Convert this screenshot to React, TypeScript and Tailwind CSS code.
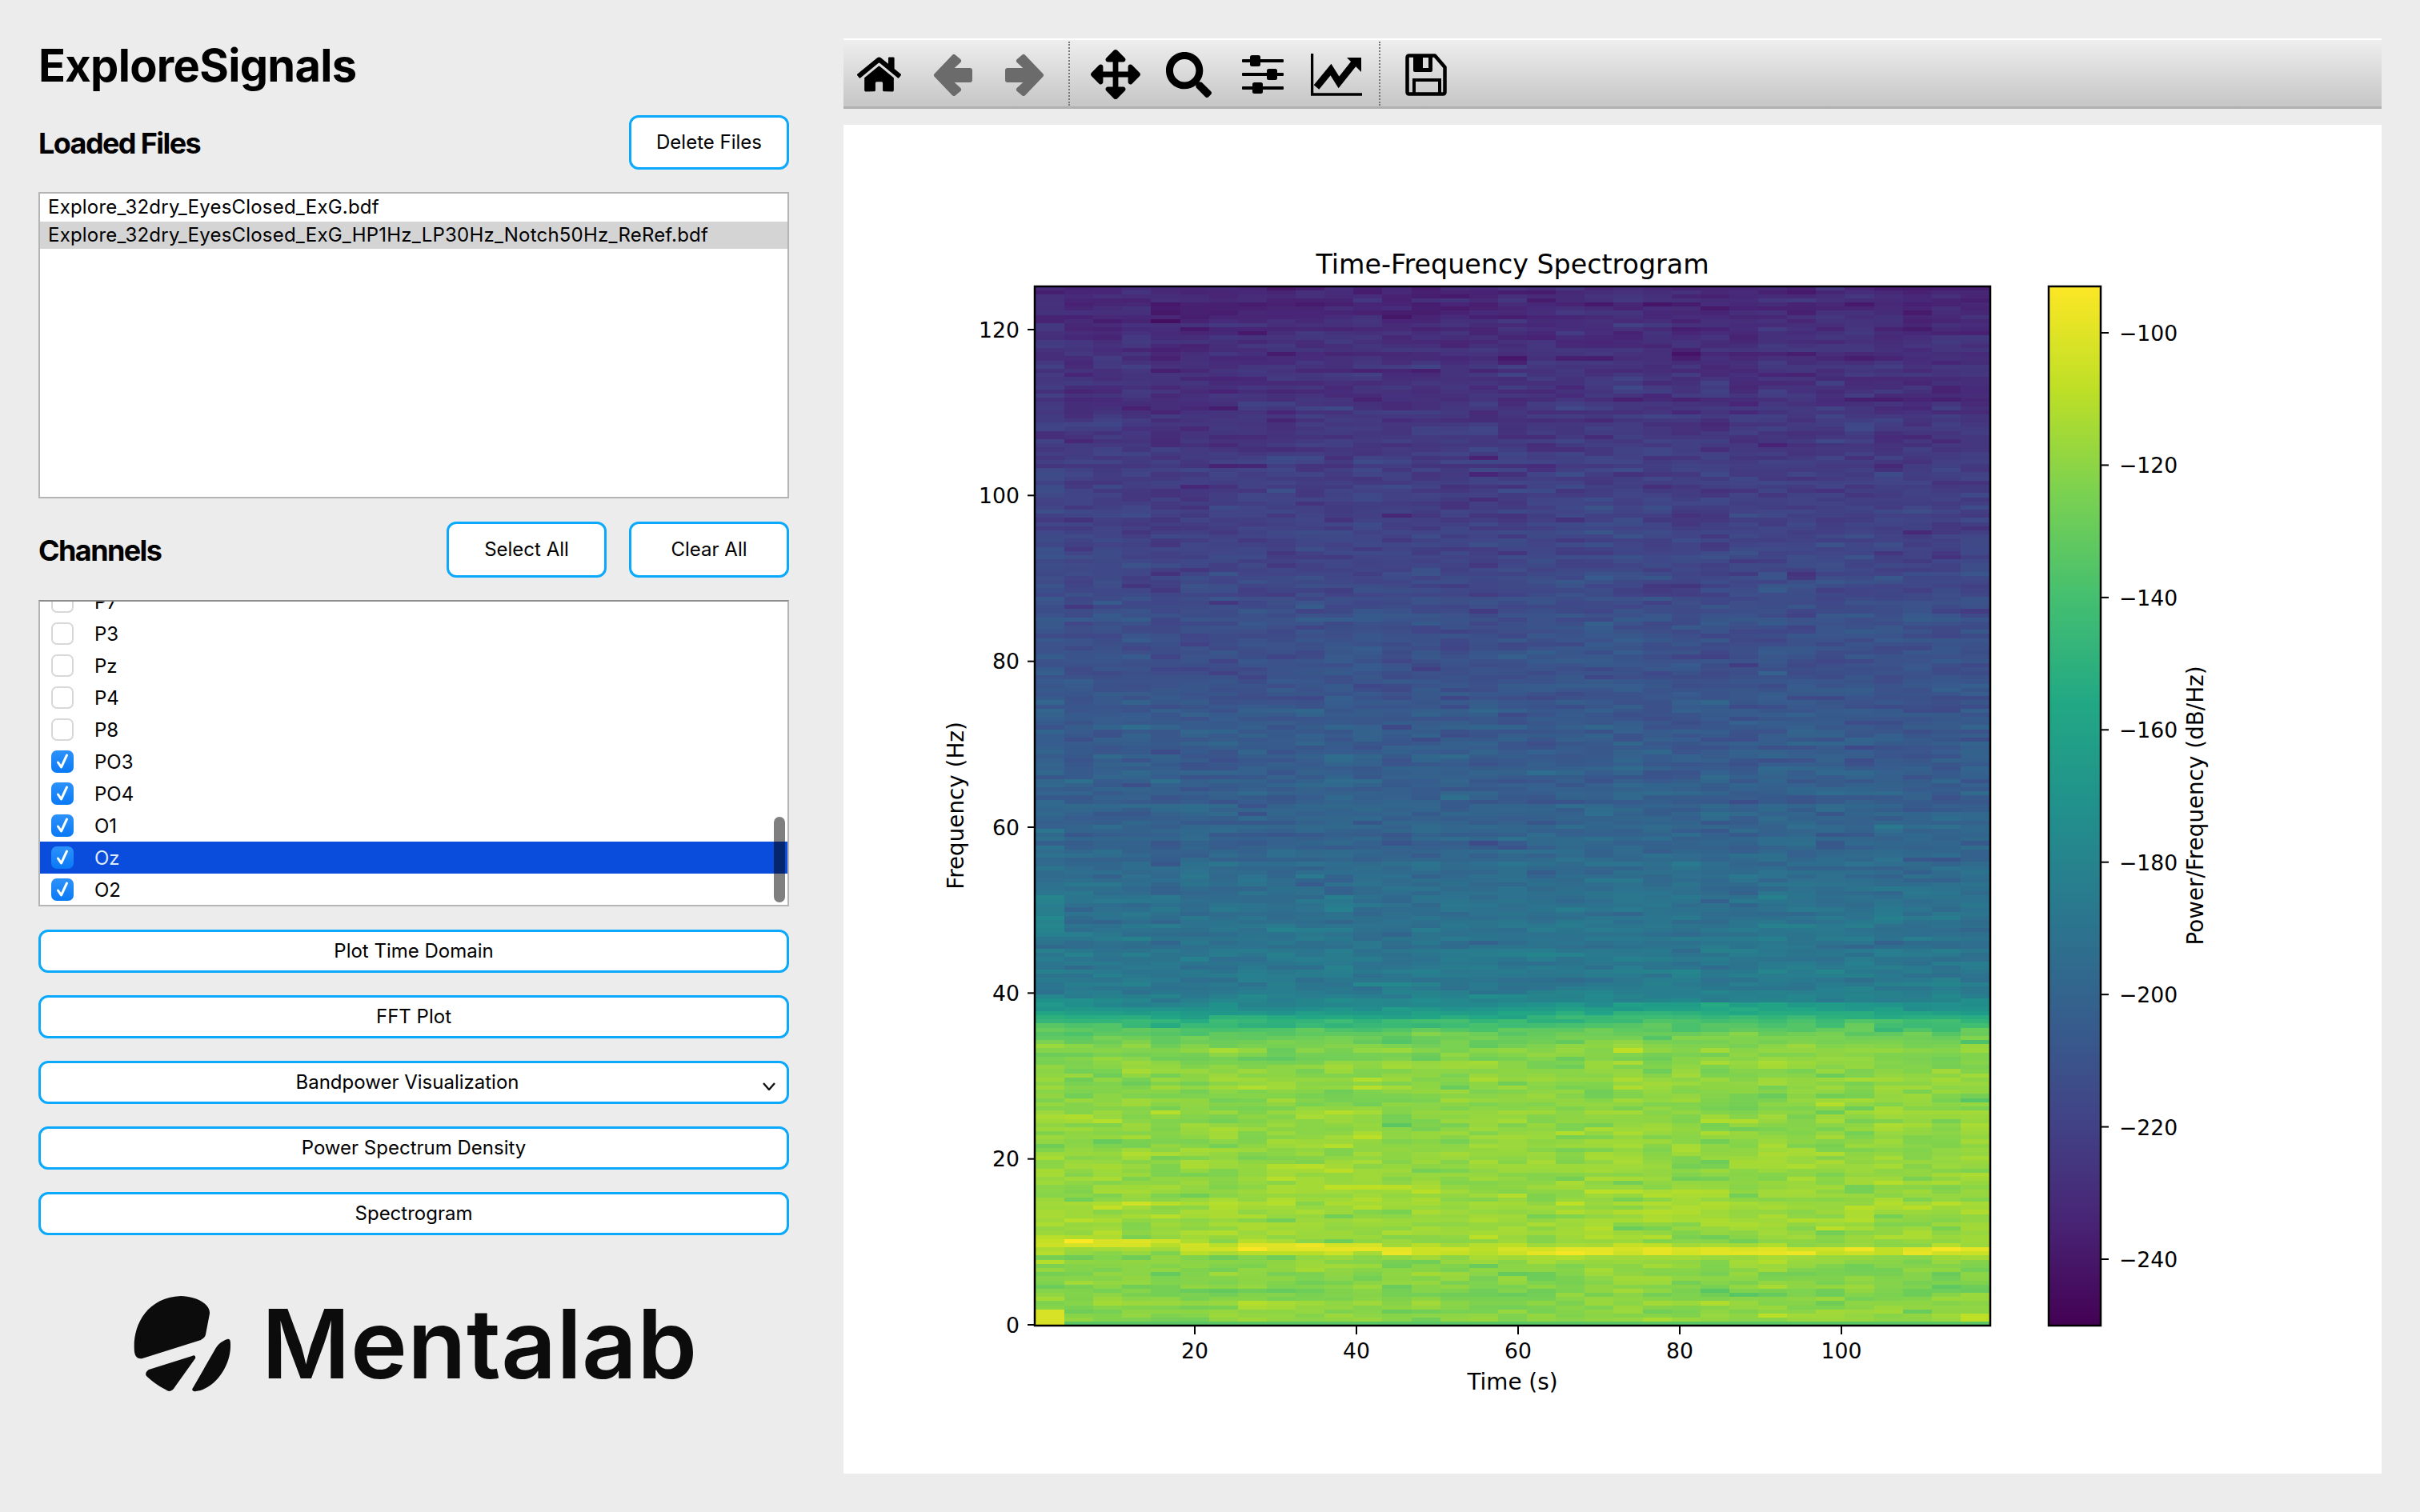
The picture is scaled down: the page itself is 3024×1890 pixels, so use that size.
import { FaArrowsAlt, FaHome, FaSearch } from "react-icons/fa";

const VIRIDIS = [
  [68, 1, 84],
  [72, 36, 117],
  [65, 68, 135],
  [53, 95, 141],
  [42, 120, 142],
  [33, 145, 140],
  [34, 168, 132],
  [68, 191, 112],
  [122, 209, 81],
  [189, 223, 38],
  [253, 231, 37],
];

function viridis(v: number) {
  const t = Math.min(0.999, Math.max(0, v)) * 10;
  const i = Math.floor(t);
  const a = VIRIDIS[i];
  const b = VIRIDIS[i + 1];
  const k = t - i;
  const c = a.map((x, n) => Math.round(x + (b[n] - x) * k));
  return `rgb(${c[0]},${c[1]},${c[2]})`;
}

// mean colour position per frequency, read off the picture
const PROFILE = [
  [0, 0.835], [2, 0.825], [6, 0.815], [12, 0.85], [20, 0.84], [30, 0.83], [34, 0.805], [36, 0.73],
  [37.5, 0.61], [39, 0.46], [41, 0.41], [50, 0.37], [60, 0.32], [80, 0.255], [100, 0.185], [125, 0.11],
];

function profile(f: number) {
  for (let i = 1; i < PROFILE.length; i++) {
    if (f <= PROFILE[i][0]) {
      const [f0, v0] = PROFILE[i - 1];
      const [f1, v1] = PROFILE[i];
      return v0 + ((v1 - v0) * (f - f0)) / (f1 - f0);
    }
  }
  return 0.11;
}

function makeRng(seed: number) {
  let a = seed;
  return () => {
    a = (a + 0x6d2b79f5) | 0;
    let t = Math.imul(a ^ (a >>> 15), 1 | a);
    t = (t + Math.imul(t ^ (t >>> 7), 61 | t)) ^ t;
    return ((t ^ (t >>> 14)) >>> 0) / 4294967296;
  };
}

const COLS = 33;
const ROWS = 251;
const AX = { left: 1294, right: 2486, top: 358, bottom: 1657 };
const ROW_H = 5.18;
const COL_W = (AX.right - AX.left) / COLS;

function buildCells() {
  const rnd = makeRng(42);
  const gauss = () => (rnd() + rnd() + rnd() - 1.5) / 0.5;
  const rowBias = Array.from({ length: ROWS }, () => gauss() * 0.012);
  const prev = new Array(ROWS).fill(0);
  const cells: { x: number; y: number; fill: string }[] = [];
  for (let c = 0; c < COLS; c++) {
    const colBias = gauss() * 0.004;
    const t = c / (COLS - 1);
    const edge = Math.sin(t * 6.3) * 0.5;
    const peak = 10.1 - 1.1 * Math.min(1, t * 2.2) + 0.5 * Math.max(0, t - 0.6);
    const peakGain = 0.6 + rnd() * 0.7;
    let below = 0;
    for (let r = 0; r < ROWS; r++) {
      const f = (r + 0.5) / 2;
      // streaks run along time, barely across frequency
      const spike = rnd() < 0.07 ? (rnd() < 0.6 ? -0.04 : 0.035) : 0;
      const noise = 0.2 * prev[r] + 0.12 * below + gauss() * 0.019 + spike;
      prev[r] = noise;
      below = noise;
      let v = profile(f + edge) + rowBias[r] * 0.6 + colBias + noise;
      const d = Math.abs(f - peak);
      if (d < 2) v += 0.07 * (1 - d / 2) * (1 - d / 2) + (d < 0.5 ? 0.06 * peakGain : 0);
      if (c === 0 && f > 45) v += 0.02;
      if (c === 0 && f > 47 && f < 52) v += 0.05;
      if (c === 0 && f < 2) v = 0.94;
      if (c === COLS - 1 && f < 1.5) v = 0.9;
      if (r === 0 && c > 0) v = 0.74;
      cells.push({
        x: AX.left + c * COL_W,
        y: AX.bottom - (r + 1) * ROW_H,
        fill: viridis(v),
      });
    }
  }
  return cells;
}

const CELLS = buildCells();
const Y_TICKS = [0, 20, 40, 60, 80, 100, 120];
const X_TICKS = [20, 40, 60, 80, 100];
const CB_TICKS = [-100, -120, -140, -160, -180, -200, -220, -240];
const TICK_FONT = { fontFamily: "'DejaVu Sans', sans-serif", fontSize: 26.67 };
const LABEL_FONT = { fontFamily: "'DejaVu Sans', sans-serif", fontSize: 27.8 };

function Spectrogram() {
  return (
    <svg viewBox="1054 156 1922 1686" className="block w-full h-full">
      <defs>
        <linearGradient id="viridis" x1="0" y1="1" x2="0" y2="0">
          {VIRIDIS.map((_, i) => (
            <stop key={i} offset={`${i * 10}%`} stopColor={viridis(i / 10)} />
          ))}
        </linearGradient>
      </defs>
      <g shapeRendering="crispEdges">
        {CELLS.map((c, i) => (
          <rect key={i} x={c.x} y={c.y} width={COL_W + 0.5} height={ROW_H + 0.5} fill={c.fill} />
        ))}
      </g>
      <rect x={AX.left - 1} y={AX.top} width={AX.right - AX.left + 2} height={AX.bottom - AX.top} fill="none" stroke="#000" strokeWidth="2.5" />
      {Y_TICKS.map((t) => {
        const y = 1656 - (t * 1244) / 120;
        return (
          <g key={t}>
            <line x1={1284} x2={AX.left} y1={y} y2={y} stroke="#000" strokeWidth="2" />
            <text x={1274} y={y + 9.7} textAnchor="end" style={TICK_FONT}>{t}</text>
          </g>
        );
      })}
      {X_TICKS.map((t) => {
        const x = 1493 + ((t - 20) * 808) / 80;
        return (
          <g key={t}>
            <line x1={x} x2={x} y1={AX.bottom} y2={1668} stroke="#000" strokeWidth="2" />
            <text x={x} y={1698} textAnchor="middle" style={TICK_FONT}>{t}</text>
          </g>
        );
      })}
      <text x={1890} y={342} textAnchor="middle" style={{ ...TICK_FONT, fontSize: 33.3 }}>Time-Frequency Spectrogram</text>
      <text x={1890} y={1737} textAnchor="middle" style={LABEL_FONT}>Time (s)</text>
      <text transform="translate(1204 1007) rotate(-90)" textAnchor="middle" style={LABEL_FONT}>Frequency (Hz)</text>
      <rect x={2560} y={AX.top} width={65} height={AX.bottom - AX.top} fill="url(#viridis)" stroke="#000" strokeWidth="2.5" />
      {CB_TICKS.map((t) => {
        const y = 416 + ((-100 - t) * 1158) / 140;
        return (
          <g key={t}>
            <line x1={2625} x2={2635} y1={y} y2={y} stroke="#000" strokeWidth="2" />
            <text x={2648} y={y + 10} style={TICK_FONT}>{"\u2212" + Math.abs(t)}</text>
          </g>
        );
      })}
      <text transform="translate(2753 1007) rotate(-90)" textAnchor="middle" style={LABEL_FONT}>Power/Frequency (dB/Hz)</text>
    </svg>
  );
}

function ArrowIcon({ flip }: { flip?: boolean }) {
  return (
    <svg viewBox="0 0 50 53" className={`w-[50px] h-[53px] ${flip ? "-scale-x-100" : ""}`}>
      <path d="M4 27 L26 4 L32 9 L19 21 L46 21 L46 33 L19 33 L32 45 L26 50 Z" fill="#6b6b6b" stroke="#6b6b6b" strokeWidth="6" strokeLinejoin="round" />
    </svg>
  );
}

function ChartIcon() {
  return (
    <svg viewBox="0 0 64 53" className="w-[64px] h-[53px]">
      <path d="M1.5 0 V51 H64" fill="none" stroke="#000" strokeWidth="3.5" />
      <path d="M7 42 L25 20 L35 36 L54 12" fill="none" stroke="#000" strokeWidth="8.5" />
      <path d="M45 5 H63 V23 Z" fill="#000" />
    </svg>
  );
}

function SlidersIcon() {
  return (
    <svg viewBox="0 0 52 48" className="w-[52px] h-[48px]">
      <g fill="#000">
        <rect x="0" y="5" width="52" height="4" rx="1" />
        <rect x="0" y="22" width="52" height="4" rx="1" />
        <rect x="0" y="39" width="52" height="4" rx="1" />
        <rect x="10" y="0" width="13" height="14" rx="2.5" />
        <rect x="31" y="17" width="13" height="14" rx="2.5" />
        <rect x="13" y="34" width="13" height="14" rx="2.5" />
      </g>
    </svg>
  );
}

function SaveIcon() {
  return (
    <svg viewBox="0 0 52 53" className="w-[52px] h-[53px]">
      <path d="M2.5 5 Q2.5 2.5 5 2.5 H37 L49.5 17 V48 Q49.5 50.5 47 50.5 H5 Q2.5 50.5 2.5 48 Z" fill="none" stroke="#000" strokeWidth="4.5" strokeLinejoin="round" />
      <path d="M10 2 H34 V21 Q34 23 32 23 H12 Q10 23 10 21 Z" fill="#000" />
      <rect x="22" y="5" width="7" height="13" fill="#dcdcdc" />
      <path d="M11 51 V33 H43 V51" fill="none" stroke="#000" strokeWidth="4" />
    </svg>
  );
}

function ToolSeparator({ className }: { className: string }) {
  return <div className={`h-[80px] -mt-[2px] border-l-2 border-dotted border-[#777] ${className}`} />;
}

function Toolbar() {
  return (
    <div className="h-[88px] pt-[3px] flex items-center border-t-2 border-t-white border-b-[3px] border-b-[#b0b0b0] bg-linear-to-b from-[#eeeeee] to-[#c6c6c6]">
      <FaHome className="ml-[17px] w-[55px] h-[50px]" />
      <div className="ml-[40px]"><ArrowIcon /></div>
      <div className="ml-[39px]"><ArrowIcon flip /></div>
      <ToolSeparator className="ml-[30px]" />
      <FaArrowsAlt className="ml-[26px] w-[62px] h-[62px]" />
      <FaSearch className="ml-[32px] w-[57px] h-[57px]" />
      <div className="ml-[38px]"><SlidersIcon /></div>
      <div className="ml-[34px]"><ChartIcon /></div>
      <ToolSeparator className="ml-[21px]" />
      <div className="ml-[31px]"><SaveIcon /></div>
    </div>
  );
}

function OutlineButton({ label, className }: { label: string; className: string }) {
  return (
    <button className={`bg-white border-[3px] border-[#0aa9fb] rounded-[12px] text-[24px] leading-none text-black flex items-center justify-center ${className}`}>
      {label}
    </button>
  );
}

function SectionHeader({ title, children }: { title: string; children: React.ReactNode }) {
  return (
    <div className="flex items-center justify-between h-[70px]">
      <h2 className="mt-[2px] text-[36px] font-bold tracking-[-1.6px] text-black">{title}</h2>
      <div className="flex gap-[28px]">{children}</div>
    </div>
  );
}

function Check() {
  return (
    <svg viewBox="0 0 28 28" className="w-full h-full">
      <path d="M8.5 15 L12.5 21 L19.5 6" fill="none" stroke="#fff" strokeWidth="3" strokeLinecap="round" strokeLinejoin="round" />
    </svg>
  );
}

const CHANNELS = [
  { name: "P7", on: false },
  { name: "P3", on: false },
  { name: "Pz", on: false },
  { name: "P4", on: false },
  { name: "P8", on: false },
  { name: "PO3", on: true },
  { name: "PO4", on: true },
  { name: "O1", on: true },
  { name: "Oz", on: true, active: true },
  { name: "O2", on: true },
];

function ChannelList() {
  return (
    <div className="relative h-[383px] bg-white border-2 border-[#b4b4b4] border-t-[#8e8e8e] overflow-hidden flex flex-col justify-end">
      <div className="-mb-px">
        {CHANNELS.map((ch) => (
          <div key={ch.name} className={`h-[40px] flex items-center pl-[14px] text-[24px] ${ch.active ? "bg-[#0a4cdb] text-[#dfe9ff]" : "text-black"}`}>
            <span className={`w-[28px] h-[28px] rounded-[7px] ${ch.on ? "bg-linear-to-b from-[#2b92fb] to-[#0779f5]" : "bg-white border-2 border-[#d8d8d8]"}`}>
              {ch.on && <Check />}
            </span>
            <span className="ml-[26px] mt-[1px]">{ch.name}</span>
          </div>
        ))}
      </div>
      <div className="absolute right-[3px] bottom-[3px] w-[14px] h-[107px] rounded-full bg-black/50" />
    </div>
  );
}

function MentalabLogo() {
  return (
    <div className="flex items-center ml-[119px] mt-[76px] h-[120px]">
      <svg viewBox="26 29 122 122" className="w-[122px] h-[122px] fill-[#0c0c0c]">
        <path d="M85 30 C100 30 122 38 121 52 L116 78 C115 82 113 83 110 85 L37 108 C31 109 28 106 27 100 C24 70 40 32 85 30 Z" />
        <path d="M99 105 C102 103 104 106 103 108 L78 143 C74 150 70 150 66 147 C56 142 47 135 42 130 C40 127 42 124 45 122 Z" />
        <path d="M143 84 C146 83 147 85 147 90 C148 118 127 146 104 149 C100 150 98 147 100 145 L127 98 C131 90 137 86 143 84 Z" />
      </svg>
      <span className="ml-[38px] text-[120px] leading-none font-semibold text-[#0c0c0c] tracking-[0.3px]">Mentalab</span>
    </div>
  );
}

export default function App() {
  return (
    <div className="w-[3024px] h-[1890px] bg-[#ececec] flex font-['Inter',sans-serif] overflow-hidden">
      <aside className="w-[1054px] pl-[48px] pr-[68px] pt-[48px] shrink-0">
        <h1 className="h-[68px] flex items-center text-[56px] font-bold tracking-[-0.7px] text-black">ExploreSignals</h1>
        <div className="mt-[27px]">
          <SectionHeader title="Loaded Files">
            <OutlineButton label="Delete Files" className="w-[200px] h-[68px]" />
          </SectionHeader>
        </div>
        <div className="mt-[27px] h-[383px] bg-white border-2 border-[#b4b4b4] text-[24px] text-black tracking-[0.2px]">
          <div className="h-[35px] pl-[10px] pb-[1px] flex items-center">Explore_32dry_EyesClosed_ExG.bdf</div>
          <div className="h-[34px] pl-[10px] pb-[1px] flex items-center bg-[#d4d4d4]">Explore_32dry_EyesClosed_ExG_HP1Hz_LP30Hz_Notch50Hz_ReRef.bdf</div>
        </div>
        <div className="mt-[29px]">
          <SectionHeader title="Channels">
            <OutlineButton label="Select All" className="w-[200px] h-[70px]" />
            <OutlineButton label="Clear All" className="w-[200px] h-[70px]" />
          </SectionHeader>
        </div>
        <div className="mt-[28px]">
          <ChannelList />
        </div>
        <div className="mt-[29px] flex flex-col gap-[28px]">
          <OutlineButton label="Plot Time Domain" className="w-full h-[54px]" />
          <OutlineButton label="FFT Plot" className="w-full h-[54px]" />
          <button className="relative w-full h-[54px] bg-white border-[3px] border-[#0aa9fb] rounded-[12px] text-[24px] text-black flex items-center justify-center pr-[16px]">
            Bandpower Visualization
            <svg viewBox="0 0 16 10" className="absolute right-[14px] top-[24px] w-[16px] h-[10px]">
              <path d="M1 1 L8 9 L15 1" fill="none" stroke="#111" strokeWidth="2.4" />
            </svg>
          </button>
          <OutlineButton label="Power Spectrum Density" className="w-full h-[54px]" />
          <OutlineButton label="Spectrogram" className="w-full h-[54px]" />
        </div>
        <MentalabLogo />
      </aside>
      <main className="w-[1922px] pt-[48px] flex flex-col">
        <Toolbar />
        <div className="mt-[20px] h-[1686px] bg-white">
          <Spectrogram />
        </div>
      </main>
    </div>
  );
}
